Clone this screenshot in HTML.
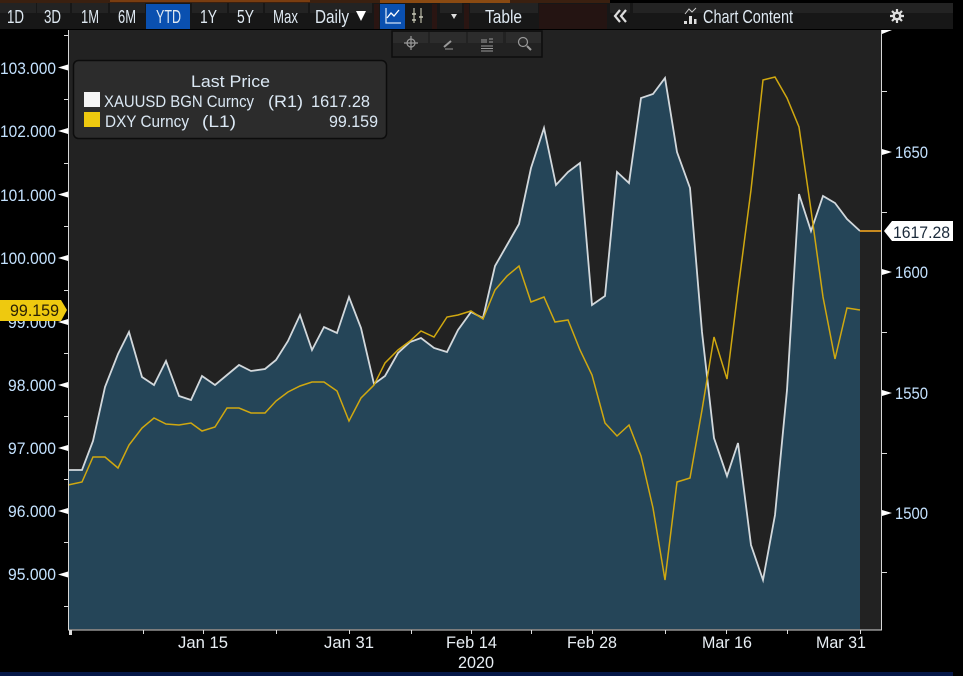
<!DOCTYPE html>
<html><head><meta charset="utf-8"><style>
html,body{margin:0;padding:0;background:#000;width:963px;height:676px;overflow:hidden}
svg{display:block}
text{font-family:"Liberation Sans",sans-serif}
</style></head><body>
<svg width="963" height="676" viewBox="0 0 963 676" xmlns="http://www.w3.org/2000/svg">
<rect width="963" height="676" fill="#000"/>
<!-- top strip -->
<rect x="0" y="0" width="610" height="3" fill="#3a2010"/>
<rect x="110" y="0" width="200" height="2" fill="#7a3d10"/>
<rect x="380" y="0" width="130" height="3" fill="#8a4a12"/>
<!-- toolbar -->
<rect x="0" y="3" width="953" height="26" fill="#171717"/>
<g fill="#232323">
<rect x="0" y="3" width="36" height="10"/><rect x="37" y="3" width="33" height="10"/><rect x="72" y="3" width="36" height="10"/><rect x="110" y="3" width="35" height="10"/>
<rect x="192" y="3" width="35" height="10"/><rect x="229" y="3" width="34" height="10"/><rect x="265" y="3" width="43" height="10"/><rect x="310" y="3" width="62" height="10"/>
<rect x="440" y="3" width="22" height="10"/><rect x="470" y="3" width="68" height="10"/><rect x="610" y="3" width="20" height="10"/><rect x="633" y="3" width="228" height="10"/><rect x="843" y="3" width="110" height="10"/>
</g>
<rect x="539" y="4" width="68" height="25" fill="#241412"/>
<rect x="374" y="4" width="5" height="25" fill="#2a1512"/>
<rect x="432" y="4" width="5" height="25" fill="#2a1512"/>
<rect x="464" y="4" width="5" height="25" fill="#2a1512"/>
<rect x="146" y="4" width="44" height="25" fill="#0a50b0"/>
<rect x="380" y="4" width="25" height="25" fill="#0a50b0"/>
<g fill="#dfe9f2" font-size="18">
<text x="7" y="23" textLength="17" lengthAdjust="spacingAndGlyphs">1D</text>
<text x="44" y="23" textLength="17" lengthAdjust="spacingAndGlyphs">3D</text>
<text x="81" y="23" textLength="18" lengthAdjust="spacingAndGlyphs">1M</text>
<text x="118" y="23" textLength="18" lengthAdjust="spacingAndGlyphs">6M</text>
<text x="156" y="23" textLength="25" lengthAdjust="spacingAndGlyphs">YTD</text>
<text x="200" y="23" textLength="17" lengthAdjust="spacingAndGlyphs">1Y</text>
<text x="237" y="23" textLength="17" lengthAdjust="spacingAndGlyphs">5Y</text>
<text x="273" y="23" textLength="25" lengthAdjust="spacingAndGlyphs">Max</text>
<text x="315" y="23" textLength="34" lengthAdjust="spacingAndGlyphs">Daily</text>
<text x="485" y="23" textLength="37" lengthAdjust="spacingAndGlyphs">Table</text>
<text x="703" y="23" textLength="90" lengthAdjust="spacingAndGlyphs">Chart Content</text>
</g>
<path d="M356 11h10l-5 10z" fill="#fff"/>
<path d="M451 14h6l-3 5z" fill="#ddd"/>
<!-- chart icon -->
<path d="M386 8v15h15" fill="none" stroke="#cfe0f5" stroke-width="1.300"/>
<path d="M387 18l4-5 3 3 5-6" fill="none" stroke="#fff" stroke-width="1.300"/>
<!-- candle icon -->
<path d="M414 8v15M421 8v15" stroke="#9a9a8a" stroke-width="1.500"/>
<path d="M412 14h4M419 17h4M412 20h4" stroke="#c8c8b8" stroke-width="1.500"/>
<!-- chevrons -->
<path d="M620 10l-5 6 5 6M626 10l-5 6 5 6" fill="none" stroke="#ddd" stroke-width="2.200"/>
<!-- chart content icon -->
<path d="M685 14l4-5 3 3 4-4" fill="none" stroke="#ccc" stroke-width="1"/>
<path d="M684 24v-3h3v3zM689 24v-8h3v8zM694 24v-5h2.500v5z" fill="#ddd"/>
<!-- gear -->
<g transform="translate(897,16)"><path d="M0-7V7M-7 0H7M-5-5L5 5M-5 5L5-5" stroke="#ddd" stroke-width="2.200"/><circle r="4.500" fill="#ddd"/><circle r="2" fill="#1c1c1c"/></g>

<!-- plot -->
<rect x="68" y="30" width="814" height="600" fill="#222"/>
<polygon fill="#254558" points="68,629 68,470 82,470 93,441 105,387 118,354 129,332 142,377 154,385 166,361 179,396 191,400 202,376 215,385 227,375 239,365 251,371 265,369 276,360 288,341 300,315 312,350 324,327 337,333 349,297 361,328 374,384 385,376 398,353 410,342 421,338 434,348 447,352 458,330 471,312 483,318 495,266 507,245 519,224 531,168 544,128 556,185 568,172 580,163 592,305 605,296 617,172 629,183 641,98 653,94 665,78 677,152 690,188 702,332 714,438 727,476 738,443 751,545 763,580 775,515 787,390 799,194 811,231 823,196 835,203 847,219 860,231 860,629"/>
<polyline fill="none" stroke="#d2d8dc" stroke-width="1.800" points="68,470 82,470 93,441 105,387 118,354 129,332 142,377 154,385 166,361 179,396 191,400 202,376 215,385 227,375 239,365 251,371 265,369 276,360 288,341 300,315 312,350 324,327 337,333 349,297 361,328 374,384 385,376 398,353 410,342 421,338 434,348 447,352 458,330 471,312 483,318 495,266 507,245 519,224 531,168 544,128 556,185 568,172 580,163 592,305 605,296 617,172 629,183 641,98 653,94 665,78 677,152 690,188 702,332 714,438 727,476 738,443 751,545 763,580 775,515 787,390 799,194 811,231 823,196 835,203 847,219 860,231"/>
<polyline fill="none" stroke="#d0a810" stroke-width="1.500" points="68,485 82,482 93,457 105,457 118,468 129,445 142,428 154,418 166,424 179,425 191,423 202,431 215,427 227,408 239,408 251,413 265,413 276,401 288,392 300,386 312,382 324,382 337,391 349,421 361,398 374,385 385,363 398,350 410,341 421,331 434,337 447,317 458,315 471,311 483,319 495,290 507,276 519,266 531,302 544,297 555,322 568,320 580,350 592,375 605,423 617,436 629,425 641,456 653,508 665,580 677,482 690,478 702,410 714,337 727,379 738,290 751,190 763,80 775,77 787,98 799,127 811,210 823,297 835,359 847,308 860,310"/>
<rect x="860" y="230" width="22" height="2" fill="#c88a20"/>

<!-- axes -->
<path d="M68.500 30V630M881.500 30V630M68 630H882" stroke="#d8d8d8" stroke-width="1" fill="none"/>
<g stroke="#ddd" stroke-width="1">
<path d="M64 35.500h4M64 99.500h4M64 163.500h4M64 226.500h4M64 290.500h4M64 353.500h4M64 416.500h4M64 479.500h4M64 542.500h4M64 606.500h4"/>
<path d="M882 91.500h5M882 212.500h5M882 332.500h5M882 453.500h5M882 572.500h5"/>
<path d="M143.500 630v4M203.500 630v4M276.500 630v4M349.500 630v4M411.500 630v4M471.500 630v4M531.500 630v4M592.500 630v4M665.500 630v4M726.500 630v4M787.500 630v4M860.500 630v4"/>
</g>
<rect x="69" y="630" width="3" height="5" fill="#ddd"/>
<g fill="#fff">
<path d="M58 67.500l10-3v6zM58 131l10-3v6zM58 194.500l10-3v6zM58 258l10-3v6zM58 322l10-3v6zM58 385l10-3v6zM58 448l10-3v6zM58 511l10-3v6zM58 574.500l10-3v6z"/>
<path d="M892 152l-10-3v6zM892 272l-10-3v6zM892 393l-10-3v6zM892 513l-10-3v6zM892 30h-10v4z"/>
</g>

<!-- left labels -->
<g fill="#c4e2ff" font-size="17">
<text x="0" y="74" textLength="56" lengthAdjust="spacingAndGlyphs">103.000</text>
<text x="0" y="137" textLength="56" lengthAdjust="spacingAndGlyphs">102.000</text>
<text x="0" y="201" textLength="56" lengthAdjust="spacingAndGlyphs">101.000</text>
<text x="0" y="264" textLength="56" lengthAdjust="spacingAndGlyphs">100.000</text>
<text x="8" y="328" textLength="48" lengthAdjust="spacingAndGlyphs">99.000</text>
<text x="8" y="391" textLength="48" lengthAdjust="spacingAndGlyphs">98.000</text>
<text x="8" y="454" textLength="48" lengthAdjust="spacingAndGlyphs">97.000</text>
<text x="8" y="517" textLength="48" lengthAdjust="spacingAndGlyphs">96.000</text>
<text x="8" y="580" textLength="48" lengthAdjust="spacingAndGlyphs">95.000</text>
</g>
<polygon points="0,300 61,300 67,310 61,321 0,321" fill="#eec90f"/>
<text x="10" y="316" font-size="17" fill="#2a2005" textLength="49" lengthAdjust="spacingAndGlyphs">99.159</text>

<!-- right labels -->
<g fill="#c4e2ff" font-size="17">
<text x="895" y="158" textLength="33" lengthAdjust="spacingAndGlyphs">1650</text>
<text x="895" y="278" textLength="33" lengthAdjust="spacingAndGlyphs">1600</text>
<text x="895" y="399" textLength="33" lengthAdjust="spacingAndGlyphs">1550</text>
<text x="895" y="519" textLength="33" lengthAdjust="spacingAndGlyphs">1500</text>
</g>
<polygon points="884,231 892,221 953,221 953,241 892,241" fill="#fff"/>
<text x="893" y="238" font-size="17" fill="#1b2a3a" textLength="57" lengthAdjust="spacingAndGlyphs">1617.28</text>

<!-- x labels -->
<g fill="#e8eef4" font-size="17">
<text x="178" y="648" textLength="50" lengthAdjust="spacingAndGlyphs">Jan 15</text>
<text x="324" y="648" textLength="50" lengthAdjust="spacingAndGlyphs">Jan 31</text>
<text x="446" y="648" textLength="51" lengthAdjust="spacingAndGlyphs">Feb 14</text>
<text x="567" y="648" textLength="50" lengthAdjust="spacingAndGlyphs">Feb 28</text>
<text x="702" y="648" textLength="50" lengthAdjust="spacingAndGlyphs">Mar 16</text>
<text x="816" y="648" textLength="50" lengthAdjust="spacingAndGlyphs">Mar 31</text>
<text x="458" y="668" textLength="36" lengthAdjust="spacingAndGlyphs">2020</text>
</g>
<rect x="0" y="672" width="953" height="4" fill="#061848"/>

<!-- legend -->
<rect x="73.500" y="60.500" width="313" height="78" rx="5" fill="#2c2c2c" stroke="#0c0c0c" stroke-width="1.500"/>
<g fill="#dbe8f4" font-size="17">
<text x="191" y="87" textLength="79" lengthAdjust="spacingAndGlyphs">Last Price</text>
<text x="104" y="107" textLength="150" lengthAdjust="spacingAndGlyphs">XAUUSD BGN Curncy</text>
<text x="268" y="107" textLength="35" lengthAdjust="spacingAndGlyphs">(R1)</text>
<text x="311" y="107" textLength="59" lengthAdjust="spacingAndGlyphs">1617.28</text>
<text x="105" y="127" textLength="84" lengthAdjust="spacingAndGlyphs">DXY Curncy</text>
<text x="202" y="127" textLength="34" lengthAdjust="spacingAndGlyphs">(L1)</text>
<text x="329" y="127" textLength="49" lengthAdjust="spacingAndGlyphs">99.159</text>
</g>
<rect x="84" y="92" width="16" height="15" fill="#f4f4f4"/>
<rect x="84" y="112" width="16" height="15" fill="#eec90f"/>

<!-- floating tools -->
<rect x="392" y="31" width="150" height="26" fill="#222" stroke="#0d0d0d" stroke-width="1.500"/>
<g fill="#2c2c2c"><rect x="393" y="32" width="35" height="11"/><rect x="430" y="32" width="36" height="11"/><rect x="468" y="32" width="35" height="11"/><rect x="506" y="32" width="35" height="11"/></g>
<g fill="none" stroke="#9a9a9a" stroke-width="1.200">
<circle cx="411" cy="43" r="4"/><path d="M411 36v14M404 43h14"/>
<path d="M444 47l7-6" stroke-width="2"/><path d="M445 49h8" stroke-width="1"/>
<path d="M481 40h6M481 42h6" stroke-width="1"/><path d="M481 46h12M481 48.500h12M481 51h12M489 39h4M489 42h4" stroke-width="1"/>
<circle cx="523" cy="42" r="4.500"/><path d="M527 46l4 4" stroke-width="2"/>
</g>
</svg>
</body></html>
